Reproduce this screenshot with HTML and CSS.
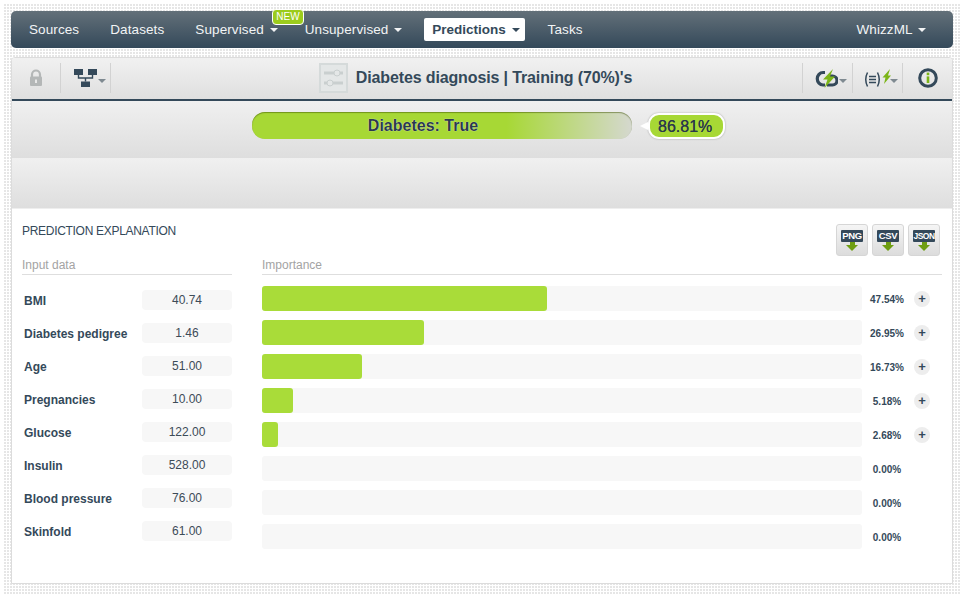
FILE: index.html
```html
<!DOCTYPE html>
<html lang="en">

<head>
    <meta charset="UTF-8">
    <title>Diabetes diagnosis | Training (70%)'s</title>
    <link rel="stylesheet" href="styles.css">
</head>

<body>
    <nav class="topnav">
        <a class="nav-item">Sources</a>
        <a class="nav-item">Datasets</a>
        <a class="nav-item has-badge">Supervised <i class="caret"></i><span class="badge">NEW</span></a>
        <a class="nav-item">Unsupervised <i class="caret"></i></a>
        <a class="nav-item active">Predictions <i class="caret"></i></a>
        <a class="nav-item">Tasks</a>
        <a class="nav-item nav-right">WhizzML <i class="caret"></i></a>
    </nav>

    <main class="panel">
        <header class="toolbar">
            <div class="tool tool-lock">
                <svg width="14" height="18" viewBox="0 0 14 18">
                    <path d="M3 8V5.500a4 4 0 0 1 8 0V8" fill="none" stroke="#b4b7b7" stroke-width="2.200" />
                    <rect x="1" y="7.500" width="12" height="9.500" rx="1" fill="#b4b7b7" />
                    <rect x="6" y="10.500" width="2" height="3.500" fill="#e8e8e8" />
                </svg>
            </div>
            <div class="tool tool-tree">
                <svg width="23" height="18" viewBox="0 0 23 18">
                    <rect x="0" y="0" width="9" height="6" fill="#34495a" />
                    <rect x="14" y="0" width="9" height="6" fill="#34495a" />
                    <rect x="7" y="12.500" width="9" height="5.500" fill="#34495a" />
                    <path d="M4.500 6v3h14V6M11.500 9v3.500" fill="none" stroke="#34495a" stroke-width="1.400" />
                </svg>
                <i class="mini-caret"></i>
            </div>
            <div class="title">
                <span class="title-icon">
                    <svg width="29" height="30" viewBox="0 0 29 30">
                        <rect x="1" y="1" width="27" height="28" fill="#e4e7e7" stroke="#d5dada" stroke-width="2" />
                        <path d="M5 10h19M5 20h19" stroke="#c9cfcf" stroke-width="3" />
                        <circle cx="18" cy="10" r="3" fill="#e4e7e7" stroke="#c9cfcf" />
                        <circle cx="11" cy="20" r="3" fill="#e4e7e7" stroke="#c9cfcf" />
                    </svg>
                </span>
                <span>Diabetes diagnosis | Training (70%)'s</span>
            </div>
            <div class="tool tool-cloud">
                <svg width="23" height="19" viewBox="0 0 23 19">
                    <path d="M10 3.500H8a5.500 6 0 0 0 0 12.500h2" fill="none" stroke="#34495a" stroke-width="3.200" />
                    <path d="M15 7h2.500a4.500 4.500 0 0 1 0 9H12" fill="none" stroke="#34495a" stroke-width="3.200" />
                    <path d="M18 0 8 10.500h4.500L9.500 19 20 7.500h-5z" fill="#7cb518" />
                </svg>
                <i class="mini-caret"></i>
            </div>
            <div class="tool tool-formula">
                <svg width="27" height="18" viewBox="0 0 27 18">
                    <path d="M3.500 3.500Q0 10.500 3.500 17.500M13.500 3.500Q17 10.500 13.500 17.500" fill="none" stroke="#34495a" stroke-width="1.500" />
                    <path d="M5 7.500h7M5 10.500h7M5 13.500h7" stroke="#34495a" stroke-width="1.300" />
                    <path d="M26 0 18.500 8.500h3L20 15l7-8.500h-3z" fill="#7cb518" />
                </svg>
                <i class="mini-caret"></i>
            </div>
            <div class="tool tool-info">
                <svg width="20" height="20" viewBox="0 0 20 20">
                    <circle cx="10" cy="10" r="8.300" fill="none" stroke="#34495a" stroke-width="3" />
                    <rect x="8.700" y="4.600" width="2.600" height="2.600" fill="#7cb518" />
                    <rect x="8.700" y="8.400" width="2.600" height="6.600" fill="#7cb518" />
                </svg>
            </div>
        </header>

        <section class="band band-result">
            <div class="result-bar">
                <div class="result-fill">Diabetes: True</div>
            </div>
            <div class="confidence">86.81%</div>
        </section>
        <section class="band band-empty"></section>

        <section class="explain">
            <div class="explain-head">
                <h3>PREDICTION EXPLANATION</h3>
                <div class="exports">
                    <a class="export"><span>PNG</span><i></i></a>
                    <a class="export"><span>CSV</span><i></i></a>
                    <a class="export export-json"><span>JSON</span><i></i></a>
                </div>
            </div>
            <div class="explain-body">
                <div class="inputs">
                    <div class="col-title">Input data</div>
                    <div class="input-row"><b>BMI</b><span class="pill">40.74</span></div>
                    <div class="input-row"><b>Diabetes pedigree</b><span class="pill">1.46</span></div>
                    <div class="input-row"><b>Age</b><span class="pill">51.00</span></div>
                    <div class="input-row"><b>Pregnancies</b><span class="pill">10.00</span></div>
                    <div class="input-row"><b>Glucose</b><span class="pill">122.00</span></div>
                    <div class="input-row"><b>Insulin</b><span class="pill">528.00</span></div>
                    <div class="input-row"><b>Blood pressure</b><span class="pill">76.00</span></div>
                    <div class="input-row"><b>Skinfold</b><span class="pill">61.00</span></div>
                </div>
                <div class="importance">
                    <div class="col-title">Importance</div>
                    <div class="bar-row">
                        <div class="bar"><div class="bar-fill" style="width: 47.54%"></div></div>
                        <span class="pct">47.54%</span><span class="plus">+</span>
                    </div>
                    <div class="bar-row">
                        <div class="bar"><div class="bar-fill" style="width: 26.95%"></div></div>
                        <span class="pct">26.95%</span><span class="plus">+</span>
                    </div>
                    <div class="bar-row">
                        <div class="bar"><div class="bar-fill" style="width: 16.73%"></div></div>
                        <span class="pct">16.73%</span><span class="plus">+</span>
                    </div>
                    <div class="bar-row">
                        <div class="bar"><div class="bar-fill" style="width: 5.18%"></div></div>
                        <span class="pct">5.18%</span><span class="plus">+</span>
                    </div>
                    <div class="bar-row">
                        <div class="bar"><div class="bar-fill" style="width: 2.68%"></div></div>
                        <span class="pct">2.68%</span><span class="plus">+</span>
                    </div>
                    <div class="bar-row">
                        <div class="bar"></div>
                        <span class="pct">0.00%</span>
                    </div>
                    <div class="bar-row">
                        <div class="bar"></div>
                        <span class="pct">0.00%</span>
                    </div>
                    <div class="bar-row">
                        <div class="bar"></div>
                        <span class="pct">0.00%</span>
                    </div>
                </div>
            </div>
        </section>
    </main>
</body>

</html>
```

FILE: styles.css
```css
body {
    margin: 0;
    padding: 8px 7px 11px 8px;
    box-sizing: border-box;
    height: 595px;
    overflow: hidden;
    font-family: "Liberation Sans", Arial, sans-serif;
    color: #34495a;
    background-color: #fff;
    background-image: linear-gradient(#fff 1px, transparent 1px),
        linear-gradient(90deg, #fff 1px, #e6e6e6 1px);
    background-size: 3px 3px;
    background-clip: padding-box;
    border: solid #fff;
    border-width: 3px 2px 0 3px;
}

/* top navigation */
.topnav {
    display: flex;
    align-items: center;
    height: 37px;
    padding: 0 27px 0 18px;
    border-radius: 5px;
    background: linear-gradient(#637079, #34495a);
}

.nav-item {
    position: relative;
    margin-right: 31px;
    font-size: 13.5px;
    letter-spacing: 0.1px;
    color: #f2f4f5;
    white-space: nowrap;
}

.caret {
    display: inline-block;
    margin-left: 2px;
    vertical-align: 2px;
    border-top: 4px solid currentColor;
    border-left: 4px solid transparent;
    border-right: 4px solid transparent;
}

.has-badge {
    margin-right: 27px;
}

.badge {
    position: absolute;
    top: -13px;
    left: 77px;
    padding: 2px 3px;
    font-size: 10px;
    line-height: 10px;
    letter-spacing: 0;
    color: #fff;
    background: #9ccc1c;
    border: 1px solid #fff;
    border-radius: 4px;
}

.active {
    margin: 0 23px 0 -9px;
    padding: 4px 5px 4px 8px;
    font-weight: bold;
    letter-spacing: 0;
    color: #34495a;
    background: #fff;
    border-radius: 2px;
}

.nav-right {
    margin: 0 0 0 auto;
}

/* main panel */
.panel {
    height: 527px;
    margin-top: 9px;
    box-sizing: border-box;
    background: #fff;
    border: 1px solid #dcdcdc;
    border-radius: 4px 4px 0 0;
}

.toolbar {
    display: flex;
    align-items: center;
    height: 43px;
    box-sizing: border-box;
    padding-bottom: 1px;
    background: linear-gradient(#f1f1f1, #dfdfdf);
    border-bottom: 2px solid #34495a;
    border-radius: 3px 3px 0 0;
}

.tool {
    display: flex;
    align-items: center;
    justify-content: center;
    box-sizing: border-box;
    height: 30px;
    border-right: 1px solid #d2d2d2;
}

.tool-lock {
    width: 49px;
}

.tool-tree {
    width: 50px;
    padding-left: 8px;
}

.title {
    flex: 1;
    display: flex;
    align-items: center;
    justify-content: center;
    gap: 8px;
    padding-left: 38px;
    font-size: 16px;
    font-weight: bold;
    letter-spacing: -0.13px;
}

.title-icon {
    display: flex;
}

.tool-cloud {
    width: 51px;
    padding-left: 6px;
    border-left: 1px solid #d2d2d2;
}

.tool-formula {
    width: 50px;
    padding-left: 7px;
}

.tool-formula .mini-caret {
    margin-left: -1px;
}

.tool-info {
    width: 49px;
    border-right: none;
}

.mini-caret {
    margin: 6px 0 0 1px;
    border-top: 4px solid #7f8a91;
    border-left: 4px solid transparent;
    border-right: 4px solid transparent;
}

.band {
    background: linear-gradient(#f0f0f0, #dedede);
}

.band-result {
    display: flex;
    align-items: flex-start;
    height: 57px;
    padding: 11px 0 0 240px;
    box-sizing: border-box;
}

.band-empty {
    height: 50px;
    border-bottom: 1px solid #eee;
}

.result-bar {
    width: 380px;
    height: 27px;
    border-radius: 13px;
    background: #d5d8cf;
}

.result-fill {
    height: 100%;
    font-size: 16px;
    font-weight: bold;
    line-height: 27px;
    text-align: center;
    padding-right: 38px;
    box-sizing: border-box;
    color: #2b3a4c;
    text-shadow: 0 0 1px #fff;
    border-radius: 13px;
    background: linear-gradient(90deg, #a7d835 67%, #d5d8cf 100%);
    box-shadow: inset 0 1px 1px rgba(60, 80, 0, 0.5);
}

.confidence {
    position: relative;
    margin: 1px 0 0 16px;
    padding: 0 11px 0 8px;
    height: 22px;
    font-size: 16px;
    line-height: 24px;
    color: #2b3a4c;
    text-shadow: 0 0 0.5px #2b3a4c;
    background: #a7d835;
    border: 2px solid #fff;
    border-radius: 11px;
    box-shadow: 0 0 2px rgba(0, 0, 0, 0.3);
}

.confidence::before {
    content: "";
    position: absolute;
    left: -10px;
    top: 7px;
    border-top: 4px solid transparent;
    border-bottom: 4px solid transparent;
    border-right: 8px solid #fff;
}

/* explanation */
.explain {
    padding: 0 10px;
}

.explain-head {
    display: flex;
    justify-content: space-between;
    height: 50px;
    align-items: flex-start;
}

.explain-head h3 {
    margin: 15px 0 0;
    font-size: 12px;
    font-weight: normal;
    letter-spacing: -0.3px;
}

.exports {
    display: flex;
    gap: 4px;
    margin: 15px 2px 0 0;
}

.export {
    display: flex;
    flex-direction: column;
    align-items: center;
    width: 32px;
    height: 32px;
    padding-top: 5px;
    box-sizing: border-box;
    border: 1px solid #d6d6d6;
    border-radius: 3px;
    background: linear-gradient(#f5f5f5, #dcdcdc);
}

.export span {
    width: 22px;
    height: 12px;
    font-size: 9.5px;
    font-weight: bold;
    line-height: 12px;
    letter-spacing: -0.4px;
    text-align: center;
    white-space: nowrap;
    color: #fff;
    background: #34495a;
    border-radius: 1px;
}

.export-json span {
    font-size: 8.5px;
    letter-spacing: -0.5px;
}

.export i {
    position: relative;
    width: 5px;
    height: 3px;
    background: #6f9e12;
}

.export i::after {
    content: "";
    position: absolute;
    left: -3.5px;
    top: 3px;
    border-top: 6px solid #6f9e12;
    border-left: 6px solid transparent;
    border-right: 6px solid transparent;
}

.explain-body {
    display: flex;
    gap: 30px;
}

.col-title {
    height: 15px;
    margin-bottom: 11px;
    font-size: 12px;
    line-height: 13px;
    color: #a3a3a3;
    border-bottom: 1px solid #dedede;
}

.inputs {
    width: 210px;
    flex: none;
}

.inputs .col-title {
    margin-bottom: 8px;
}

.input-row {
    display: flex;
    align-items: center;
    justify-content: space-between;
    height: 33px;
    font-size: 12px;
    padding-left: 2px;
}

.input-row b {
    margin-top: 2px;
}

.pill {
    width: 90px;
    height: 20px;
    font-size: 12px;
    line-height: 20px;
    text-align: center;
    color: #3d4b57;
    background: #f7f7f7;
    border-radius: 4px;
}

.importance {
    flex: 1;
}

.bar-row {
    display: flex;
    align-items: center;
    height: 25px;
    margin-bottom: 9px;
}

.bar {
    width: 600px;
    height: 25px;
    flex: none;
    background: #f7f7f7;
    border-radius: 3px;
}

.bar-fill {
    height: 100%;
    background: #a9dc39;
    border-radius: 3px;
}

.pct {
    width: 42px;
    margin: 2px 0 0 4px;
    font-size: 10px;
    font-weight: bold;
    text-align: center;
    flex: none;
}

.plus {
    width: 16px;
    height: 16px;
    margin-left: 6px;
    font-size: 13px;
    font-weight: bold;
    line-height: 15px;
    text-align: center;
    background: #ededed;
    border-radius: 50%;
}
```
